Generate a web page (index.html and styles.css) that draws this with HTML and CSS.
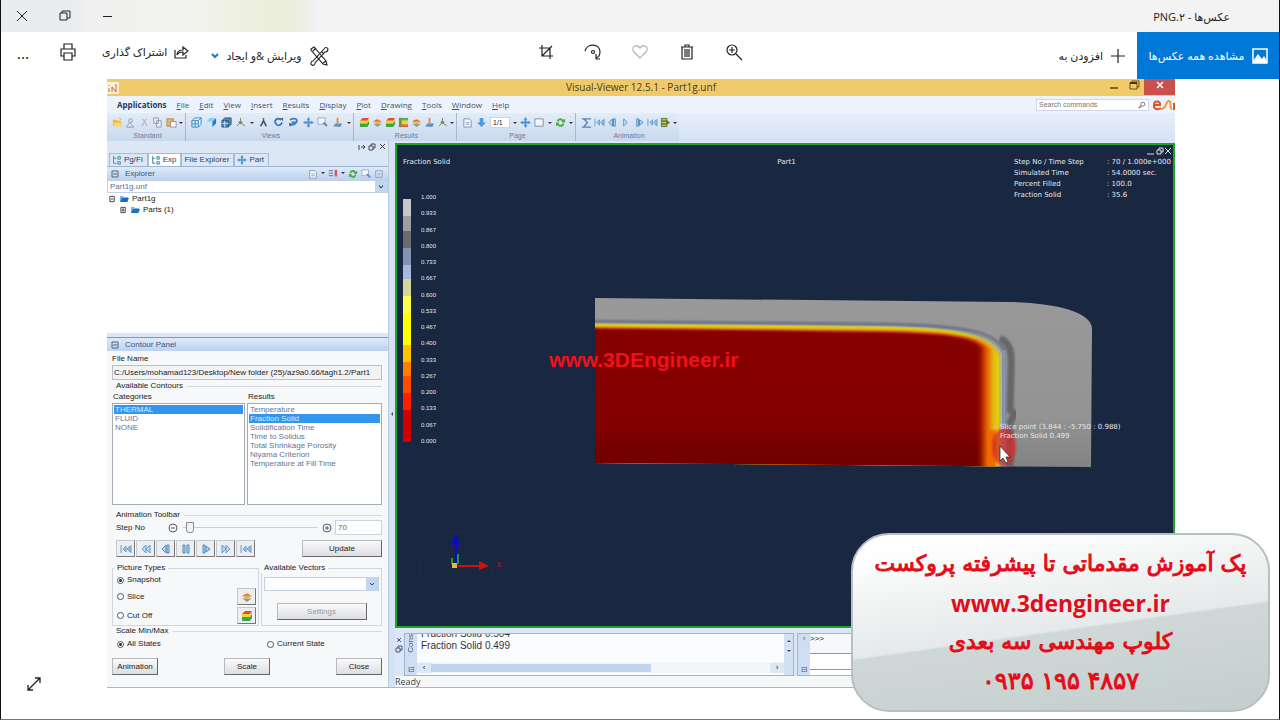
FILE: index.html
```html
<!DOCTYPE html>
<html lang="fa">
<head>
<meta charset="utf-8">
<title>عکس‌ها - PNG.۲</title>
<link rel="stylesheet" href="styles.css">
</head>
<body>
<svg class="defs" aria-hidden="true">
  <symbol id="folder" viewBox="0 0 12 12"><path d="M1 3h4l1 1h4v6H1z" fill="#f5b82e"/><path d="M3 6h8l-2 4H1z" fill="#ffd667"/><path d="M8 1l2 2" stroke="#d84"/></symbol>
  <symbol id="page" viewBox="0 0 12 12"><path d="M2 2h6l2 2v7H2z" fill="#f4f6fa" stroke="#8290a8"/><path d="M4 6h4M4 8h4" stroke="#8fa3c0"/></symbol>
  <symbol id="person" viewBox="0 0 12 12"><circle cx="6" cy="4" r="2" fill="none" stroke="#8a94a8"/><path d="M2 10l3-4 4 4M1 11h9" fill="none" stroke="#8a94a8"/></symbol>
  <symbol id="cut" viewBox="0 0 12 12"><path d="M4 2l4 6M8 2L4 8M3 10l2-2M9 10L7 8" stroke="#9aa3b5" fill="none"/></symbol>
  <symbol id="copy" viewBox="0 0 12 12"><path d="M2 1h5v6H2zM5 4h5v7H5z" fill="#eef1f7" stroke="#8c95a6"/></symbol>
  <symbol id="paste" viewBox="0 0 12 12"><path d="M1 2h7v8H1z" fill="#e9b45f" stroke="#b98a40"/><path d="M5 5h6v6H5z" fill="#fff" stroke="#98a"/></symbol>
  <symbol id="wire" viewBox="0 0 12 12"><path d="M1 4h7v7H1zM1 4l3-3h7v7l-3 3M8 4l3-3M4.500 4v7M1 7.500h7" fill="#dcf2fc" stroke="#2f86bd"/></symbol>
  <symbol id="cube" viewBox="0 0 12 12"><path d="M1 5h6v6H1z" fill="#c7e6f8"/><path d="M7 5l4-4v6l-4 4z" fill="#2678c9"/><path d="M1 5l3-4h7L7 5z" fill="#8fc9f2"/></symbol>
  <symbol id="mesh" viewBox="0 0 12 12"><path d="M1 4h7v7H1zM1 4l3-3h7v7l-3 3" fill="#4d8cbc" stroke="#2b5478"/><path d="M4 4v7M1 7h7" stroke="#bfe0f5"/></symbol>
  <symbol id="axes" viewBox="0 0 12 12"><path d="M6 6V1M6 6l-4 4M6 6l5 4" stroke="#5a9060" fill="none"/><circle cx="6" cy="6" r="2" fill="#a87860"/></symbol>
  <symbol id="aim" viewBox="0 0 12 12"><path d="M6 2l4 8H8L6 6l-2 4H2z" fill="#445571"/><circle cx="6" cy="2" r="1" fill="#445571"/></symbol>
  <symbol id="turn" viewBox="0 0 12 12"><path d="M9 3C4 0 1 4 3 7s5 3 7-1" fill="none" stroke="#3a7fbd" stroke-width="2"/><path d="M8 1h3v4z" fill="#365d84"/></symbol>
  <symbol id="turn2" viewBox="0 0 12 12"><path d="M2 3c6-3 9 0 7 3s-4 3-7 2M4 6h5" fill="none" stroke="#3a7fbd" stroke-width="2"/><path d="M1 6l3 2-2 3z" fill="#365d84"/></symbol>
  <symbol id="move" viewBox="0 0 12 12"><path d="M6 0l2 3H7v2h2V4l3 2-3 2V7H7v2h1l-2 3-2-3h1V7H3v1L0 6l3-2v1h2V3H4z" fill="#4c93d3"/></symbol>
  <symbol id="zoombox" viewBox="0 0 12 12"><path d="M1 1h8v7H1z" fill="#f2f7fc" stroke="#98a6bb"/><path d="M7 6l4 4" stroke="#6682a4" stroke-width="2"/></symbol>
  <symbol id="stand" viewBox="0 0 12 12"><path d="M1 10l3-3h7l-2 4z" fill="#5a91c5"/><path d="M5 1h2v7H5z" fill="#db8c48"/></symbol>
  <symbol id="layers" viewBox="0 0 12 12"><path d="M1 4l3-3h7L9 4z" fill="#e54b3b"/><path d="M1 7V4h8l2-3v3L9 7z" fill="#f3d42c"/><path d="M1 11V7h8l2-3v4L9 11z" fill="#3da648"/></symbol>
  <symbol id="bands" viewBox="0 0 12 12"><path d="M1 1h10v3H1z" fill="#5bb04b"/><path d="M1 4h10v4H1z" fill="#f3d42c"/><path d="M1 8h10v3H1z" fill="#db6a3b"/><path d="M1 1h3v10H1z" fill="#7c8f4c"/></symbol>
  <symbol id="slice" viewBox="0 0 12 12"><path d="M1 5l5-3 5 3-5 3z" fill="#eda84b"/><path d="M1 7l5 4 5-4-5 1z" fill="#8e9a78"/><path d="M3 4h5" stroke="#c63"/></symbol>
  <symbol id="down" viewBox="0 0 12 12"><path d="M4 1h4v5h3l-5 5-5-5h3z" fill="#4a9be0"/></symbol>
  <symbol id="sync" viewBox="0 0 12 12"><path d="M2 5c0-4 5-5 7-2l2-1v4H7l1-1C6 3 5 3 4 5zM10 7c0 4-5 5-7 2l-2 1V6h4L4 7c1 2 3 2 4 0z" fill="#52ae43"/></symbol>
  <symbol id="sum" viewBox="0 0 12 12"><path d="M1 2h10M1 11h10M3 2l4 4-4 5" fill="none" stroke="#5b80b0" stroke-width="1.500"/></symbol>
  <symbol id="first" viewBox="0 0 12 12"><path d="M1 2v8M11 2v8M6 3L3 6l3 3zM10 3L7 6l3 3z" fill="#9fc8ee" stroke="#659cce"/></symbol>
  <symbol id="back" viewBox="0 0 12 12"><path d="M6 2L2 6l4 4zM10 2L6 6l4 4z" fill="#b9d9f3" stroke="#659cce"/></symbol>
  <symbol id="prev" viewBox="0 0 12 12"><path d="M6 2L2 6l4 4zM7 2h2v8H7z" fill="#b9d9f3" stroke="#4d88bd"/></symbol>
  <symbol id="pause" viewBox="0 0 12 12"><path d="M3 2h2v8H3zM7 2h2v8H7z" fill="#b9d9f3" stroke="#4d88bd"/></symbol>
  <symbol id="play" viewBox="0 0 12 12"><path d="M4 2l4 4-4 4z" fill="#c4e0f7" stroke="#5c94c8"/></symbol>
  <symbol id="next" viewBox="0 0 12 12"><path d="M3 2h2v8H3zM6 3l4 3-4 3z" fill="#b9d9f3" stroke="#4d88bd"/></symbol>
  <symbol id="fwd" viewBox="0 0 12 12"><path d="M2 2l4 4-4 4zM6 2l4 4-4 4z" fill="#b9d9f3" stroke="#659cce"/></symbol>
  <symbol id="film" viewBox="0 0 12 12"><path d="M1 1h7v10H1z" fill="#66833e"/><path d="M2 3h5M2 6h5M2 9h5" stroke="#ecd557"/><path d="M7 3l4 3-4 3z" fill="#657734"/></symbol>
  <symbol id="tree" viewBox="0 0 12 12"><path d="M2 1v9h3M2 4h3M7 2h3v3H7zM7 8h3v3H7z" fill="#d9f1fa" stroke="#3c7792"/></symbol>
  <symbol id="tools" viewBox="0 0 20 20"><path d="M2 3l3-2 12 14 1 4-4-1L2 4zM4 5l3-3M14 17l3-2M3 19c-2-1-1-4 1-4L15 3c1-2 3-2 4 0 0 2-1 3-3 3L6 17c0 2-2 3-3 2zM13 6l2 2" fill="none" stroke="#222" stroke-width="1.100"/></symbol>
</svg>

<div class="photos">
  <header class="titlebar">
    <div class="winbtns">
      <button aria-label="بستن"><svg viewBox="0 0 12 12"><path d="M1 1l10 10M11 1L1 11"/></svg></button>
      <button aria-label="بازیابی"><svg viewBox="0 0 12 12"><path d="M1 3h7v7H1zM3 3V1h8v7H8"/></svg></button>
      <button aria-label="کوچک کردن"><svg viewBox="0 0 12 12"><path d="M1 6.500h9"/></svg></button>
    </div>
    <h1 dir="rtl">عکس‌ها - PNG.۲</h1>
  </header>

  <nav class="toolbar">
    <div class="tools-left">
      <button class="more" aria-label="بیشتر">...</button>
      <button class="ic print" aria-label="چاپ"><svg viewBox="0 0 18 18"><path d="M5 6V1h8v5M5 13H2V6h14v7h-3M5 10h8v7H5z"/></svg></button>
      <button class="txt share" dir="rtl"><svg viewBox="0 0 16 16"><path d="M2 6v8h11v-3M4 11c0-4 3-5 6-5V3l5 4-5 4V8c-3 0-5 1-6 3z"/></svg><span>اشتراک گذاری</span></button>
      <button class="txt edit" dir="rtl"><svg class="big"><use href="#tools"/></svg><span>ویرایش &amp;و ایجاد</span><svg class="chev" viewBox="0 0 8 8"><path d="M1 2l3 3 3-3"/></svg></button>
    </div>
    <div class="tools-mid">
      <button class="ic" aria-label="برش"><svg viewBox="0 0 18 18"><path d="M2 5h11v11M5 2v11h11M5 13L15 3"/></svg></button>
      <button class="ic" aria-label="چرخش"><svg viewBox="0 0 18 18"><path d="M1 8C3 0 16 0 16 9c0 3-1 5-4 6M12 11v5h4"/><circle cx="9" cy="9" r="1.500"/></svg></button>
      <button class="ic faint" aria-label="علاقه‌مندی"><svg viewBox="0 0 18 18"><path d="M9 15L3 9C-1 4 6 0 9 5c3-5 10-1 6 4z"/></svg></button>
      <button class="ic" aria-label="حذف"><svg viewBox="0 0 18 18"><path d="M3 4h12M4 4v12h10V4M7 4V2h4v2M7 6v8M9 6v8M11 6v8"/></svg></button>
      <button class="ic" aria-label="بزرگ‌نمایی"><svg viewBox="0 0 18 18"><circle cx="7" cy="7" r="5"/><path d="M11 11l6 6M4 7h6M7 4v6"/></svg></button>
    </div>
    <div class="tools-right">
      <button class="txt add" dir="rtl"><svg viewBox="0 0 16 16"><path d="M8 1v14M1 8h14"/></svg><span>افزودن به</span></button>
      <button class="all" dir="rtl"><svg viewBox="0 0 16 16"><path d="M1 1h14v14H1z" fill="none" stroke="#fff" stroke-width="1.500"/><path d="M1 13l5-7 4 5 2-3 3 5v2H1z" fill="#fff" stroke="none"/></svg><span>مشاهده همه عکس‌ها</span></button>
    </div>
  </nav>

  <main class="stage">
    <button class="expand" aria-label="تمام صفحه"><svg viewBox="0 0 14 14"><path d="M1 13L13 1M8 1h5v5M1 8v5h5"/></svg></button>

    <div class="app" lang="en" dir="ltr">
      <div class="app-title">
        <svg class="logo" viewBox="0 0 12 12"><path d="M0 0h12v12H0z" fill="#fff0dc"/><path d="M2 10V6M2 4V3M5 10V5l4 5V2" stroke="#d8622a" fill="none"/></svg>
        <h2>Visual-Viewer 12.5.1 - Part1g.unf</h2>
        <div class="app-btns">
          <button aria-label="Minimize"><svg viewBox="0 0 12 12"><path d="M2 9h8" stroke="#5b441c" stroke-width="1.500"/></svg></button>
          <button aria-label="Restore"><svg viewBox="0 0 12 12"><path d="M2 4h7v6H2zM4 4V2h7v6H9" fill="none" stroke="#6b4c1c"/><path d="M2 4h7" stroke="#4c3209" stroke-width="2"/></svg></button>
          <button class="x" aria-label="Close"><svg viewBox="0 0 12 12"><path d="M3 3l6 6M9 3L3 9" stroke="#fff" stroke-width="1.500"/></svg></button>
        </div>
      </div>

      <div class="menubar">
        <nav class="menu"><button class="b">Applications</button><button><u>F</u>ile</button><button><u>E</u>dit</button><button><u>V</u>iew</button><button><u>I</u>nsert</button><button><u>R</u>esults</button><button><u>D</u>isplay</button><button><u>P</u>lot</button><button><u>D</u>rawing</button><button><u>T</u>ools</button><button><u>W</u>indow</button><button><u>H</u>elp</button></nav>
        <div class="search"><input type="text" placeholder="Search commands" aria-label="Search commands"><svg viewBox="0 0 10 10"><circle cx="6" cy="4" r="2.500" fill="none" stroke="#555"/><path d="M4 6L1 9" stroke="#555" stroke-width="1.500"/></svg></div>
        <svg class="esi" viewBox="0 0 22 12"><path d="M1 6h6c1-4-5-5-6-1-1 6 4 6 7 4" fill="none" stroke="#d9552f" stroke-width="2"/><path d="M8 10c6 0 4-8 8-8 3 0 0 8 3 8" fill="none" stroke="#ec9a43" stroke-width="2"/><path d="M21 4v7" stroke="#d9552f" stroke-width="2"/></svg>
      </div>

      <div class="ribbon">
        <section class="grp g1"><div class="icons"><svg><use href="#folder"/></svg><svg><use href="#person"/></svg><svg><use href="#cut"/></svg><svg><use href="#copy"/></svg><svg><use href="#paste"/></svg><i></i></div><span>Standard</span></section>
        <section class="grp g2"><div class="icons"><svg><use href="#wire"/></svg><svg><use href="#cube"/></svg><svg><use href="#mesh"/></svg><svg><use href="#axes"/></svg><i></i><svg><use href="#aim"/></svg><svg><use href="#turn"/></svg><svg><use href="#turn2"/></svg><svg><use href="#move"/></svg><svg><use href="#zoombox"/></svg><svg><use href="#stand"/></svg><i></i></div><span>Views</span></section>
        <section class="grp g3"><div class="icons"><svg><use href="#layers"/></svg><svg><use href="#slice"/></svg><svg><use href="#layers"/></svg><svg><use href="#bands"/></svg><svg><use href="#slice"/></svg><svg><use href="#stand"/></svg><svg><use href="#axes"/></svg><i></i></div><span>Results</span></section>
        <section class="grp g4"><div class="icons"><svg><use href="#page"/></svg><svg><use href="#down"/></svg><input class="pg" value="1/1" aria-label="Page"><i></i><svg><use href="#move"/></svg><svg viewBox="0 0 12 12"><path d="M1 2h9v8H1z" fill="#f2f7fc" stroke="#7f8ca0"/></svg><i></i><svg><use href="#sync"/></svg><i></i></div><span>Page</span></section>
        <section class="grp g5"><div class="icons"><svg><use href="#sum"/></svg><svg><use href="#first"/></svg><svg><use href="#prev"/></svg><svg><use href="#play"/></svg><svg><use href="#next"/></svg><svg><use href="#first"/></svg><svg><use href="#film"/></svg><i></i></div><span>Animation</span></section>
      </div>

      <div class="work">
        <aside class="side">
          <div class="dock"><svg viewBox="0 0 28 8"><path d="M1 2v5M3 4h4M5 2l2 2-2 2M11 3h4v4h-4zM13 3V1h4v4h-2M22 1l5 5M27 1l-5 5" fill="none" stroke="#445"/></svg></div>
          <div class="tabs"><button><svg><use href="#tree"/></svg>Pg/Fl</button><button class="on"><svg><use href="#tree"/></svg>Exp</button><button>File Explorer</button><button><svg><use href="#move"/></svg>Part</button></div>
          <div class="bar"><svg viewBox="0 0 8 8"><path d="M1 1h6v6H1zM2 4h4" fill="none" stroke="#567"/></svg><h3>Explorer</h3><span class="tools"><svg><use href="#page"/></svg><i></i><svg viewBox="0 0 12 12"><path d="M1 2h5M1 5h5M1 8h5" stroke="#567"/><path d="M8 1h3v8H8z" fill="#d85561"/></svg><i></i><svg><use href="#sync"/></svg><svg><use href="#zoombox"/></svg><svg viewBox="0 0 12 12"><path d="M2 2h8v8H2zM4 6h4" fill="none" stroke="#99a"/></svg></span></div>
          <select class="file" aria-label="Open file"><option>Part1g.unf</option></select>
          <ul class="treeview">
            <li><svg class="pm" viewBox="0 0 8 8"><path d="M1 1h5v6H1zM2 4h3" fill="none" stroke="#333"/></svg><svg class="fo" viewBox="0 0 10 8"><path d="M1 1h3l1 1h4v5H1z" fill="#7fb4e4"/><path d="M1 7l2-4h7L8 7z" fill="#1c6cc0"/></svg>Part1g</li>
            <li class="sub"><svg class="pm" viewBox="0 0 8 8"><path d="M1 1h5v6H1zM2 4h3M3.500 2v4" fill="none" stroke="#333"/></svg><svg class="fo" viewBox="0 0 10 8"><path d="M1 1h3l1 1h4v5H1z" fill="#7fb4e4"/><path d="M1 7l2-4h7L8 7z" fill="#1c6cc0"/></svg>Parts (1)</li>
          </ul>
          <div class="hsplit"></div>
          <div class="bar"><svg viewBox="0 0 8 8"><path d="M1 1h6v6H1zM2 4h4" fill="none" stroke="#567"/></svg><h3>Contour Panel</h3></div>
          <form class="panel" onsubmit="return false">
            <label for="fn">File Name</label>
            <input id="fn" class="path" value="C:/Users/mohamad123/Desktop/New folder (25)/az9a0.66/tagh1.2/Part1">
            <p class="legendline inset">Available Contours</p>
            <div class="lists">
              <div><p id="cat">Categories</p><ul role="listbox" aria-labelledby="cat"><li class="sel">THERMAL</li><li>FLUID</li><li>NONE</li></ul></div>
              <div><p id="res">Results</p><ul role="listbox" aria-labelledby="res"><li>Temperature</li><li class="sel">Fraction Solid</li><li>Solidification Time</li><li>Time to Solidus</li><li>Total Shrinkage Porosity</li><li>Niyama Criterion</li><li>Temperature at Fill Time</li></ul></div>
            </div>
            <p class="legendline anim">Animation Toolbar</p>
            <div class="step"><label for="st">Step No</label><button class="rnd" aria-label="Previous step"><svg viewBox="0 0 10 10"><circle cx="5" cy="5" r="4" fill="none" stroke="#557"/><path d="M3 5h4" stroke="#557"/></svg></button><input id="st" type="range" min="0" max="100" value="2"><button class="rnd" aria-label="Next step"><svg viewBox="0 0 10 10"><circle cx="5" cy="5" r="4" fill="none" stroke="#557"/><path d="M3 5h4M5 3v4" stroke="#557"/></svg></button><input class="num" value="70" aria-label="Step value"></div>
            <div class="playrow"><div class="pb"><button aria-label="First"><svg><use href="#first"/></svg></button><button aria-label="Rewind"><svg><use href="#back"/></svg></button><button aria-label="Previous"><svg><use href="#prev"/></svg></button><button aria-label="Pause"><svg><use href="#pause"/></svg></button><button aria-label="Next"><svg><use href="#next"/></svg></button><button aria-label="Forward"><svg><use href="#fwd"/></svg></button><button aria-label="Last"><svg><use href="#first"/></svg></button></div><button class="btn upd">Update</button></div>
            <div class="two">
              <fieldset class="pic"><legend>Picture Types</legend>
                <div><label><input type="radio" name="p" checked>Snapshot</label></div>
                <div><label><input type="radio" name="p">Slice</label><button class="sq" aria-label="Slice options"><svg><use href="#slice"/></svg></button></div>
                <div><label><input type="radio" name="p">Cut Off</label><button class="sq" aria-label="Cut off options"><svg><use href="#layers"/></svg></button></div>
              </fieldset>
              <fieldset class="vec"><legend>Available Vectors</legend><select class="file" aria-label="Available Vectors"><option></option></select><button class="btn set" disabled>Settings</button></fieldset>
            </div>
            <p class="legendline">Scale Min/Max</p>
            <div class="states"><label><input type="radio" name="s" checked>All States</label><label><input type="radio" name="s">Current State</label></div>
            <div class="foot"><button class="btn">Animation</button><button class="btn">Scale</button><button class="btn">Close</button></div>
          </form>
        </aside>
        <div class="vsplit"><span></span></div>

        <div class="right">
          <section class="viewer">
            <svg class="scene" viewBox="397 145 776 481">
              <defs>
                <filter id="s1" x="-5%" y="-5%" width="110%" height="110%"><feGaussianBlur stdDeviation="1"/></filter>
                <filter id="sx" x="-5%" y="-5%" width="110%" height="110%"><feGaussianBlur stdDeviation="3 1"/></filter>
                <linearGradient id="g" x1="0" y1="0" x2="0" y2="1"><stop offset="0" stop-color="#999"/><stop offset=".7" stop-color="#939393"/><stop offset="1" stop-color="#828282"/></linearGradient>
                <linearGradient id="r" x1="0" y1="0" x2="0" y2="1"><stop offset="0" stop-color="#860000"/><stop offset=".6" stop-color="#840000"/><stop offset=".75" stop-color="#740000"/><stop offset="1" stop-color="#700000"/></linearGradient>
                <clipPath id="c"><path d="M595 298L1010 302C1050 303 1090 310 1092 328L1091 467 595 463z"/></clipPath>
              </defs>
              <g clip-path="url(#c)">
                <path d="M595 297h500v172H595z" fill="url(#g)"/>
                <path d="M1000 338C1010 344 1012 350 1011 370L1010 410l5 4-5 8v60" fill="none" stroke="#666" stroke-width="7" filter="url(#s1)"/>
                <path d="M575 321L880 324C965 325 996 332 1004 350V490" fill="none" stroke="#596480" stroke-width="2" filter="url(#s1)"/>
                <path d="M1004 350V480" stroke="#8796b0" stroke-width="3"/>
                <path d="M575 323L880 326C955 327 992 333 1002 354V490H575z" fill="#b5b878"/>
                <path d="M575 324L880 327C956 328 990 335 999 356V490H575z" fill="#dfce10"/>
                <path d="M575 327L880 330C950 331 984 336 991 350V490H575z" fill="#ee6000" filter="url(#sx)"/>
                <path d="M575 328L880 332C945 333 976 337 983 348V490H575z" fill="url(#r)" filter="url(#sx)"/>
                <path d="M988 430h8v50h-8z" fill="#f26b00" filter="url(#s1)"/>
                <ellipse cx="1004" cy="447" rx="12" ry="19" fill="#d42b2b" opacity=".75" filter="url(#s1)"/>
              </g>
              <g fill="none" stroke="#1d2d48"><circle cx="456" cy="568" r="37"/><path d="M400 564h8M405 590h7v7h-7zM402 612h8M420 612h25M456 616v8"/></g>
              <path d="M456 566V542" stroke="#0a0ac8" stroke-width="2"/><path d="M451 545l5-12 4 12z" fill="#0a0ac8"/>
              <path d="M458 564v-10M452 558v6" stroke="#1f9b2c" stroke-width="2"/>
              <path d="M458 566h22" stroke="#d01010" stroke-width="2"/><path d="M479 561l10 5-10 4z" fill="#d01010"/><path d="M498 562l3 5M501 562l-3 5" stroke="#b01525"/>
              <path d="M452 563h5v5h-5z" fill="#e0b93a"/>
              <path d="M993 427h5M995 425v5" stroke="#ffb060"/>
            </svg>
            <div class="vtop">
              <span>Fraction Solid</span><span class="part">Part1</span>
              <div class="info">
                <svg viewBox="0 0 26 8"><path d="M1 7h7M11 3h4v4h-4zM13 3V1h4v4h-2M19 1l6 6M25 1l-6 6" fill="none" stroke="#dde"/></svg>
                <table><tr><td>Step No / Time Step</td><td>: 70 / 1.000e+000</td></tr><tr><td>Simulated Time</td><td>: 54.0000 sec.</td></tr><tr><td>Percent Filled</td><td>: 100.0</td></tr><tr><td>Fraction Solid</td><td>: 35.6</td></tr></table>
              </div>
            </div>
            <div class="legend"><div class="ramp"></div><ol><li>1.000</li><li>0.933</li><li>0.867</li><li>0.800</li><li>0.733</li><li>0.667</li><li>0.600</li><li>0.533</li><li>0.467</li><li>0.400</li><li>0.333</li><li>0.267</li><li>0.200</li><li>0.133</li><li>0.067</li><li>0.000</li></ol></div>
            <p class="mark">www.3DEngineer.ir</p>
            <p class="tip">Slice point (3.844 : -5.750 : 0.988)<br>Fraction Solid 0.499</p>
            <svg class="cursor" viewBox="0 0 12 19"><path d="M1 1v15l3-3 3 5 2-1-2-5h4z" fill="#fff" stroke="#222" stroke-width=".7"/></svg>
          </section>

          <section class="bottom">
            <div class="edge"><svg viewBox="0 0 8 16"><path d="M2 1l4 4M6 1L2 5M1 11h4v4H1zM3 11V9h4v4H5" fill="none" stroke="#556"/></svg></div>
            <div class="console">
              <div class="vlabel"><span>Cons</span><b>⊟</b></div>
              <div class="log">
                <div class="lines"><p>Fraction Solid 0.504</p><p>Fraction Solid 0.499</p></div>
                <div class="hscroll"><span>‹</span><div></div><span>›</span></div>
              </div>
              <div class="vscroll"><i class="up"></i><i></i></div>
            </div>
            <div class="prompt"><div class="vlabel"><b>›</b><b>⊟</b></div><div class="cmd"><p>&gt;&gt;&gt;</p><input aria-label="Command"></div></div>
          </section>
          <div class="status">Ready</div>
        </div>
      </div>
    </div>
  </main>

  <aside class="banner" dir="rtl">
    <p>پک آموزش مقدماتی تا پیشرفته پروکست</p>
    <p class="url" dir="ltr">www.3dengineer.ir</p>
    <p>کلوپ مهندسی سه بعدی</p>
    <p class="tel" dir="ltr">۰۹۳۵ ۱۹۵ ۴۸۵۷</p>
  </aside>
</div>
</body>
</html>
```
FILE: styles.css
```css
* { box-sizing: border-box; }
body { margin: 0; font-family: "Open Sans", "DejaVu Sans", sans-serif; background: #fff; color: #222; }
p, h1, h2, h3, ul, ol { margin: 0; padding: 0; font-weight: normal; list-style: none; }
button { border: 0; padding: 0; background: none; color: inherit; font: inherit; white-space: nowrap; }
input, select { font: inherit; color: inherit; min-width: 0; margin: 0; }
svg { display: block; flex: none; }
.defs { position: absolute; width: 0; height: 0; }

.photos { position: relative; min-height: 100vh; display: flex; flex-direction: column; border: solid #111; border-width: 0 1px 0 1px; border-bottom: 1px solid #777; }
.titlebar { height: 32px; display: flex; align-items: center; justify-content: space-between; padding: 0 49px 0 15px; background: linear-gradient(90deg, #e9eded 0, #e9eded 75px, #f0f0f0 90px, #f2f3ee 190px, #edf0df 250px, #eaeddc 290px, #f3f3f3 320px); }
.titlebar h1 { font-size: 11px; }
.winbtns { display: flex; gap: 31px; }
.winbtns svg { width: 12px; height: 12px; fill: none; stroke: #222; }

.toolbar { height: 47px; display: grid; grid-template-columns: 1fr auto 1fr; }
.toolbar svg { fill: none; stroke: #222; stroke-width: 1.2; }
.tools-left, .tools-mid, .tools-right { display: flex; align-items: center; }
.tools-left { padding-left: 15px; }
.tools-mid { gap: 29px; padding-bottom: 8px; }
.tools-right { justify-content: flex-end; align-items: stretch; }
.ic svg { width: 18px; height: 18px; }
.faint { opacity: .35; }
.more { width: 14px; font-size: 16px; padding-bottom: 6px; }
.print { margin-left: 29px; padding-bottom: 8px; }
.txt { display: flex; align-items: center; gap: 7px; font-size: 11px; }
.txt svg { width: 16px; height: 16px; }
.txt .big { width: 20px; height: 20px; }
.txt .chev { width: 8px; height: 8px; stroke: #1779cf; stroke-width: 2; }
.share { margin-left: 25px; padding-bottom: 8px; gap: 6px; }
.edit { margin-left: 22px; }
.add { margin-right: 11px; }
.all { width: 142px; display: flex; align-items: center; justify-content: center; gap: 7px; background: #0078d7; color: #fff; font-size: 11px; }
.all svg { width: 16px; height: 16px; }

.stage { flex: 1; position: relative; display: flex; padding: 0 104px 31px 106px; }
.expand { position: absolute; left: 26px; bottom: 28px; }
.expand svg { width: 14px; height: 14px; fill: none; stroke: #222; stroke-width: 1.3; }

.app { flex: 1; min-width: 0; display: flex; flex-direction: column; background: #d9e6f6; border-bottom: 1px solid #c9b68f; font-family: "Liberation Sans", Arial, sans-serif; font-size: 8px; line-height: 10px; }
.app-title { height: 17px; display: grid; grid-template-columns: 1fr auto 1fr; align-items: center; background: #f0ca69; }
.app-title .logo { width: 12px; height: 12px; }
.app-title h2 { font: 10px/17px "Open Sans", sans-serif; color: #4b3b1d; }
.app-btns { display: flex; justify-content: flex-end; height: 17px; }
.app-btns button { width: 20px; display: flex; justify-content: center; }
.app-btns svg { width: 12px; height: 12px; }
.app-btns .x { width: 31px; height: 16px; background: #c9504c; }
.menubar { height: 17px; display: flex; align-items: center; gap: 4px; background: #edf3fc; padding-left: 10px; }
.menu { flex: 1; display: flex; gap: 10px; font-family: "Open Sans", sans-serif; color: #44536b; }
.menu .b { font-weight: bold; color: #223a68; }
.search { display: flex; align-items: center; width: 113px; height: 12px; background: #fff; border: 1px solid #d0d8e4; padding: 0 2px; }
.search input { flex: 1; width: 20px; border: 0; padding: 0; font-size: 7px; background: none; }
.search svg { width: 8px; height: 8px; }
.esi { width: 22px; height: 12px; }

.ribbon { height: 28px; display: flex; background: linear-gradient(#e6eefa, #d5e2f3); }
.grp { display: flex; flex-direction: column; border-right: 1px solid #a8b8ce; padding: 0 2px 1px 5px; text-align: center; background: linear-gradient(#e3ecf8, #c9d8ed); }
.grp > span { font-size: 7px; line-height: 9px; color: #6b7c97; }
.icons { flex: 1; display: flex; align-items: center; justify-content: space-between; }
.icons svg { width: 11px; height: 11px; }
.g1 { width: 79px; }
.g2 { width: 168px; }
.g3 { width: 103px; }
.g4 { width: 119px; }
.g5 { width: 103px; border: 0; }
.pg { width: 20px; height: 11px; border: 1px solid #c9d5e5; padding: 0 2px; font-size: 7px; }
.icons i, .tools i { border: 2px solid transparent; border-top-color: #333; margin-top: 3px; }

.work { flex: 1; display: flex; }
.side { width: 282px; display: flex; flex-direction: column; background: #dce7f6; border-right: 1px solid #b9c8dc; }
.dock { height: 12px; display: flex; justify-content: flex-end; padding: 2px 2px 0 0; }
.dock svg { width: 28px; height: 8px; }
.tabs { display: flex; height: 14px; padding-left: 2px; color: #34425a; border-bottom: 1px solid #9bb2d0; }
.tabs button { display: flex; align-items: center; gap: 2px; padding: 0 4px 0 2px; border: 1px solid #a9bbd4; border-bottom: 0; }
.tabs .on { background: #fff; }
.tabs svg { width: 10px; height: 10px; }
.bar { height: 13px; display: flex; align-items: center; gap: 6px; padding: 0 4px; background: linear-gradient(#dfeafa, #bcd2ef); color: #3d557d; }
.bar > svg { width: 8px; height: 8px; }
.bar h3 { flex: 1; font-size: 8px; }
.tools { display: flex; gap: 3px; }
.tools svg { width: 10px; height: 10px; }
.file { appearance: none; width: 100%; height: 13px; padding: 0 2px; border: 1px solid #c3d0e2; border-radius: 0; color: #56709d; background: url("data:image/svg+xml,%3Csvg xmlns='http://www.w3.org/2000/svg' viewBox='0 0 12 12'%3E%3Cpath d='M0 0h12v12H0z' fill='%23c1d6f1'/%3E%3Cpath d='M4 5l2 2 2-2' fill='none' stroke='%23345'/%3E%3C/svg%3E") right / 12px 12px no-repeat #fff; }
.treeview { flex: 1; background: #fff; padding: 0 2px; }
.treeview li { display: flex; align-items: center; gap: 3px; height: 11px; color: #222; }
.treeview .sub { padding-left: 11px; }
.pm { width: 7px; height: 8px; }
.fo { width: 10px; height: 8px; }
.hsplit { height: 5px; border-bottom: 1px solid #8397b1; }
.panel { display: flex; flex-direction: column; background: #f7f8fa; padding: 3px 6px 12px 5px; color: #222; }
.path { height: 15px; border: 1px solid #bbc; background: #f2f3f5; padding: 0 1px; margin-top: 1px; }
.legendline { display: flex; align-items: center; gap: 4px; white-space: nowrap; padding-left: 4px; }
.legendline::after { content: ""; flex: 1; border-top: 1px solid #d5d9df; }
.inset { margin-top: 1px; }
.lists { display: grid; grid-template-columns: 133px 1fr; gap: 2px; }
.lists ul { height: 102px; background: #fff; border: 1px solid #a4abb5; padding: 1px; }
.lists li { line-height: 9px; height: 9px; padding-left: 1px; color: #5f7696; }
.lists p { line-height: 12px; padding-left: 1px; }
.lists .sel { background: #3295ee; color: #d9edff; }
.anim { margin-top: 5px; }
.step { display: flex; align-items: center; height: 15px; padding-left: 4px; }
.step label { width: 52px; }
.rnd svg { width: 10px; height: 10px; }
.step input[type=range] { appearance: none; flex: 1; height: 12px; margin: 0 5px; background: linear-gradient(#ccd, #ccd) center / 100% 1px no-repeat; }
.step input[type=range]::-webkit-slider-thumb { appearance: none; width: 8px; height: 11px; background: #f3f3f3; border: 1px solid #889; border-radius: 0 0 3px 3px; }
.step .num { width: 47px; height: 15px; margin-left: 3px; border: 1px solid #ccd3de; padding: 0 2px; color: #667; }
.playrow { display: flex; justify-content: space-between; align-items: center; margin-top: 5px; }
.pb { display: flex; gap: 1px; padding-left: 4px; }
.pb button, .sq { width: 19px; height: 17px; display: flex; align-items: center; justify-content: center; background: #eceef1; border: 1px solid #c4c8ce; border-right-color: #777; border-bottom-color: #777; }
.pb svg, .sq svg { width: 12px; height: 12px; }
.btn { height: 17px; background: linear-gradient(#fafafa, #dcdee2); border: 1px solid #b5b9c0; border-right-color: #666; border-bottom-color: #666; color: #222; font-size: 8px; }
.upd { width: 80px; }
.two { display: grid; grid-template-columns: 147px 1fr; gap: 2px; margin-top: 6px; }
fieldset { min-width: 0; margin: 0; border: 1px solid #d2d6dc; padding: 0 4px; }
legend { padding: 0 3px; margin-left: -3px; }
.pic { padding-right: 2px; }
.pic div { display: flex; justify-content: space-between; align-items: center; height: 19px; }
.pic div:first-of-type { height: 14px; }
label { display: inline-flex; align-items: center; white-space: nowrap; }
input[type=radio] { appearance: none; width: 7px; height: 7px; border: 1px solid #555; border-radius: 50%; margin-right: 3px; background: #fff; }
input[type=radio]:checked { background: radial-gradient(#333 0 1px, #fff 2px); }
.vec { padding: 4px 2px; display: flex; flex-direction: column; align-items: center; gap: 12px; }
.vec .file { height: 14px; }
.vec .set { width: 90px; }
.set { color: #999; }
.states { display: grid; grid-template-columns: 150px 1fr; padding-left: 5px; margin-top: 3px; }
.foot { display: flex; justify-content: space-between; margin-top: 9px; }
.foot .btn { width: 46px; }

.vsplit { width: 6px; display: flex; align-items: center; background: #d4e2f4; }
.vsplit span { border: 2px solid transparent; border-right-color: #446; }
.right { flex: 1; min-width: 0; display: flex; flex-direction: column; padding-top: 2px; }
.viewer { position: relative; flex: 1; overflow: hidden; background: #1a2740; border: 2px solid #1fa32a; color: #e3e7ee; font: 7px/11px "DejaVu Sans", sans-serif; }
.scene { position: absolute; inset: 0; width: 100%; height: 100%; }
.vtop { position: relative; display: flex; justify-content: space-between; padding: 0 1px 0 6px; }
.vtop > span { padding-top: 12px; width: 156px; }
.vtop .part { text-align: center; }
.info { width: 158px; }
.info svg { width: 26px; height: 8px; margin: 2px 0 2px auto; }
.info table { border-collapse: collapse; width: 100%; white-space: nowrap; }
.info td { padding: 0; height: 11px; }
.info td:first-child { width: 93px; }
.legend { position: absolute; left: 6px; top: 44px; display: flex; gap: 10px; font: bold 6px/16px "Liberation Sans", sans-serif; }
.legend li { height: 16px; }
.legend ol { display: flex; flex-direction: column; height: 260px; justify-content: space-between; }
.ramp { width: 8px; height: 243px; margin-top: 10px; background: linear-gradient(#c4c6c8 0 7%, #9c9e9f 0 13%, #696b6c 0 20%, #8492b4 0 27%, #a6b8df 0 33%, #d6d69c 0 40%, #ffff4e 0 47%, #ffff0c 0 60%, #fbc300 0 67%, #ff7e00 0 73%, #ff4d00 0 80%, #ff1f00 0 87%, #d00000 0); }
.mark { position: absolute; left: 152px; top: 203px; font: bold 21px/24px "Liberation Sans", sans-serif; color: #f01218; }
.tip { position: absolute; left: 603px; top: 278px; font: 7px/9px "DejaVu Sans", sans-serif; white-space: nowrap; }
.cursor { position: absolute; left: 602px; top: 300px; width: 12px; height: 19px; }
.bottom { display: flex; height: 48px; padding-top: 5px; gap: 3px; background: #dbe7f7; }
.edge { width: 6px; }
.edge svg { width: 8px; height: 16px; margin-top: 4px; }
.console { width: 390px; display: flex; border: 1px solid #a0b3d0; background: #fafcfe; }
.vlabel { width: 12px; display: flex; flex-direction: column; justify-content: space-between; align-items: center; background: #cfdef2; color: #4b5f80; }
.vlabel span { writing-mode: vertical-rl; transform: rotate(180deg); font-size: 8px; }
.vlabel b { font: 8px/10px "DejaVu Sans", sans-serif; }
.log { flex: 1; display: flex; flex-direction: column; justify-content: space-between; }
.lines { height: 18px; overflow: hidden; display: flex; flex-direction: column; justify-content: flex-end; padding-left: 4px; font: 10px/12px "Liberation Sans", sans-serif; color: #333; }
.lines p { flex: none; }
.hscroll { display: flex; height: 11px; align-items: center; background: #f3f6f6; margin-bottom: 2px; }
.hscroll span { width: 14px; text-align: center; background: #dce7f6; }
.hscroll div { flex: 1; height: 8px; background: linear-gradient(90deg, #bfd4ed 65%, transparent 0); }
.vscroll { width: 9px; background: #d3e1f3; display: flex; flex-direction: column; align-items: center; gap: 8px; padding-top: 4px; }
.vscroll i { border: 2px solid transparent; border-top-color: #446; }
.vscroll .up { border-color: transparent; border-bottom-color: #446; }
.prompt { flex: 1; display: flex; border: 1px solid #a0b3d0; }
.cmd { flex: 1; background: #fff; }
.cmd p { height: 20px; background: #f7f8fa; border-bottom: 1px solid #8d98ac; }
.cmd input { width: 100%; height: 16px; border: 0; border-bottom: 1px solid #8d98ac; }
.status { height: 11px; background: #f5f8f8; font: 9px/11px "Open Sans", sans-serif; color: #444; }

.banner { position: absolute; right: 9px; bottom: 7px; width: 419px; height: 179px; border: 2px solid #b6bfc4; border-radius: 38px; background: linear-gradient(172deg, #fff 8%, #e5e9e9 53%, #d0d8d7 54%, #c3cfcd); display: flex; flex-direction: column; justify-content: center; gap: 5px; align-items: center; color: #e30c18; font: bold 22px/34px "DejaVu Sans", sans-serif; -webkit-text-stroke: 1px #e30c18; white-space: nowrap; }
.banner .url { font: bold 23px/34px "Open Sans", sans-serif; -webkit-text-stroke: 0; }
.banner .tel { font-size: 24px; }
```
